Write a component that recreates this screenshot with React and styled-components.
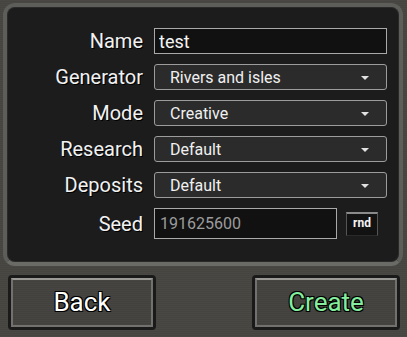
import React, { useState } from 'react'
import styled, { createGlobalStyle } from 'styled-components'

const GlobalStyle = createGlobalStyle`
    html, body {
        margin: 0;
        padding: 0;
        background: #484642;
    }
    body {
        font-family: Roboto, "Liberation Sans", sans-serif;
    }
`

const Screen = styled.div`
    width: 407px;
    height: 337px;
    box-sizing: border-box;
    padding: 3px 4px 0 3px;
    background: repeating-linear-gradient(0deg, #4a4844 0px, #4a4844 1px, #46443f 1px, #46443f 2px);
    display: flex;
    flex-direction: column;
`

const Panel = styled.div`
    height: 263px;
    box-sizing: border-box;
    border: 4px solid #5d5d5a;
    border-bottom-color: #6a6a67;
    border-radius: 12px;
    background: #1c1c1c;
    box-shadow: inset 0 0 0 1px #2a2a2a;
    padding-top: 21px;
`

const Form = styled.div`
    display: grid;
    grid-template-columns: 136px 233px;
    grid-auto-rows: 26px;
    column-gap: 11px;
    row-gap: 10px;

    & > :nth-last-child(-n + 2) {
        height: 31px;
    }
`

const Label = styled.div`
    display: flex;
    align-items: center;
    justify-content: flex-end;
    color: #f2f2f2;
    font-size: 20px;
    text-shadow: 1px 1px 0 #000;
    line-height: 1;
`

const TextInput = styled.input`
    box-sizing: border-box;
    width: ${p => p.$width || '233px'};
    height: ${p => p.$height || '26px'};
    margin: 0;
    padding: 0 0 0 ${p => p.$pad || '4px'};
    background: #111111;
    border: 1px solid ${p => p.$border || '#a9a9a9'};
    border-radius: 0;
    color: ${p => p.$color || '#f4f4f4'};
    font-family: Roboto, "Liberation Sans", sans-serif;
    font-size: ${p => p.$size || '18px'};
    outline: none;
`

const Select = styled.div`
    box-sizing: border-box;
    height: 26px;
    display: flex;
    align-items: center;
    justify-content: space-between;
    padding: 0 17px 0 15px;
    background: #2b2b2b;
    border: 1px solid #9c9c9c;
    border-radius: 3px;
    color: #f0f0f0;
    font-size: 16px;
`

const Arrow = styled.span`
    width: 0;
    height: 0;
    border-left: 4px solid transparent;
    border-right: 4px solid transparent;
    border-top: 4px solid #e2e2e2;
    margin-top: 1px;
`

const SeedField = styled.div`
    display: flex;
    align-items: center;
    gap: 9px;
`

const RndButton = styled.button`
    box-sizing: border-box;
    width: 32px;
    height: 24px;
    margin: 0;
    padding: 0 0 2px;
    background: #121212;
    border: 1px solid #555;
    border-top: 2px solid #8a8a8a;
    border-bottom-color: #2a2a2a;
    color: #f4f4f4;
    font-family: Roboto, "Liberation Sans", sans-serif;
    font-weight: bold;
    font-size: 12px;
`

const Footer = styled.div`
    display: flex;
    justify-content: space-between;
    padding: 9px 3px 0 5px;
`

const ButtonFrame = styled.div`
    width: 148px;
    height: 55px;
    box-sizing: border-box;
    padding: 3px;
    background: #1a1a1a;
    border-radius: 4px;
`

const Button = styled.button`
    width: 100%;
    height: 100%;
    margin: 0;
    padding: 0 0 2px;
    box-sizing: border-box;
    background: repeating-linear-gradient(0deg, #464541 0px, #464541 1px, #42413d 1px, #42413d 2px);
    border: 2px solid #72716d;
    border-top-color: #9a9995;
    color: ${p => p.$accent ? '#84ee9e' : '#ffffff'};
    font-family: Roboto, "Liberation Sans", sans-serif;
    font-size: 26px;
    text-shadow: -1px -1px 0 #000, 1px -1px 0 #000, -1px 1px 0 #000, 1px 1px 0 #000;
`

const selects = [
    { label: 'Generator', value: 'Rivers and isles' },
    { label: 'Mode', value: 'Creative' },
    { label: 'Research', value: 'Default' },
    { label: 'Deposits', value: 'Default' },
]

export default function App() {
    const [name, setName] = useState('test')
    const [seed, setSeed] = useState('191625600')

    return (
        <Screen>
            <GlobalStyle />
            <Panel>
                <Form>
                    <Label>Name</Label>
                    <TextInput value={name} onChange={e => setName(e.target.value)} />

                    {selects.map(s => (
                        <React.Fragment key={s.label}>
                            <Label>{s.label}</Label>
                            <Select>
                                {s.value}
                                <Arrow />
                            </Select>
                        </React.Fragment>
                    ))}

                    <Label>Seed</Label>
                    <SeedField>
                        <TextInput
                            value={seed}
                            onChange={e => setSeed(e.target.value)}
                            $width='183px'
                            $height='31px'
                            $pad='5px'
                            $size='16px'
                            $color='#9c9c9c'
                        />
                        <RndButton onClick={() => setSeed(String(Math.floor(Math.random() * 1e9)))}>rnd</RndButton>
                    </SeedField>
                </Form>
            </Panel>
            <Footer>
                <ButtonFrame>
                    <Button>Back</Button>
                </ButtonFrame>
                <ButtonFrame>
                    <Button $accent>Create</Button>
                </ButtonFrame>
            </Footer>
        </Screen>
    )
}
